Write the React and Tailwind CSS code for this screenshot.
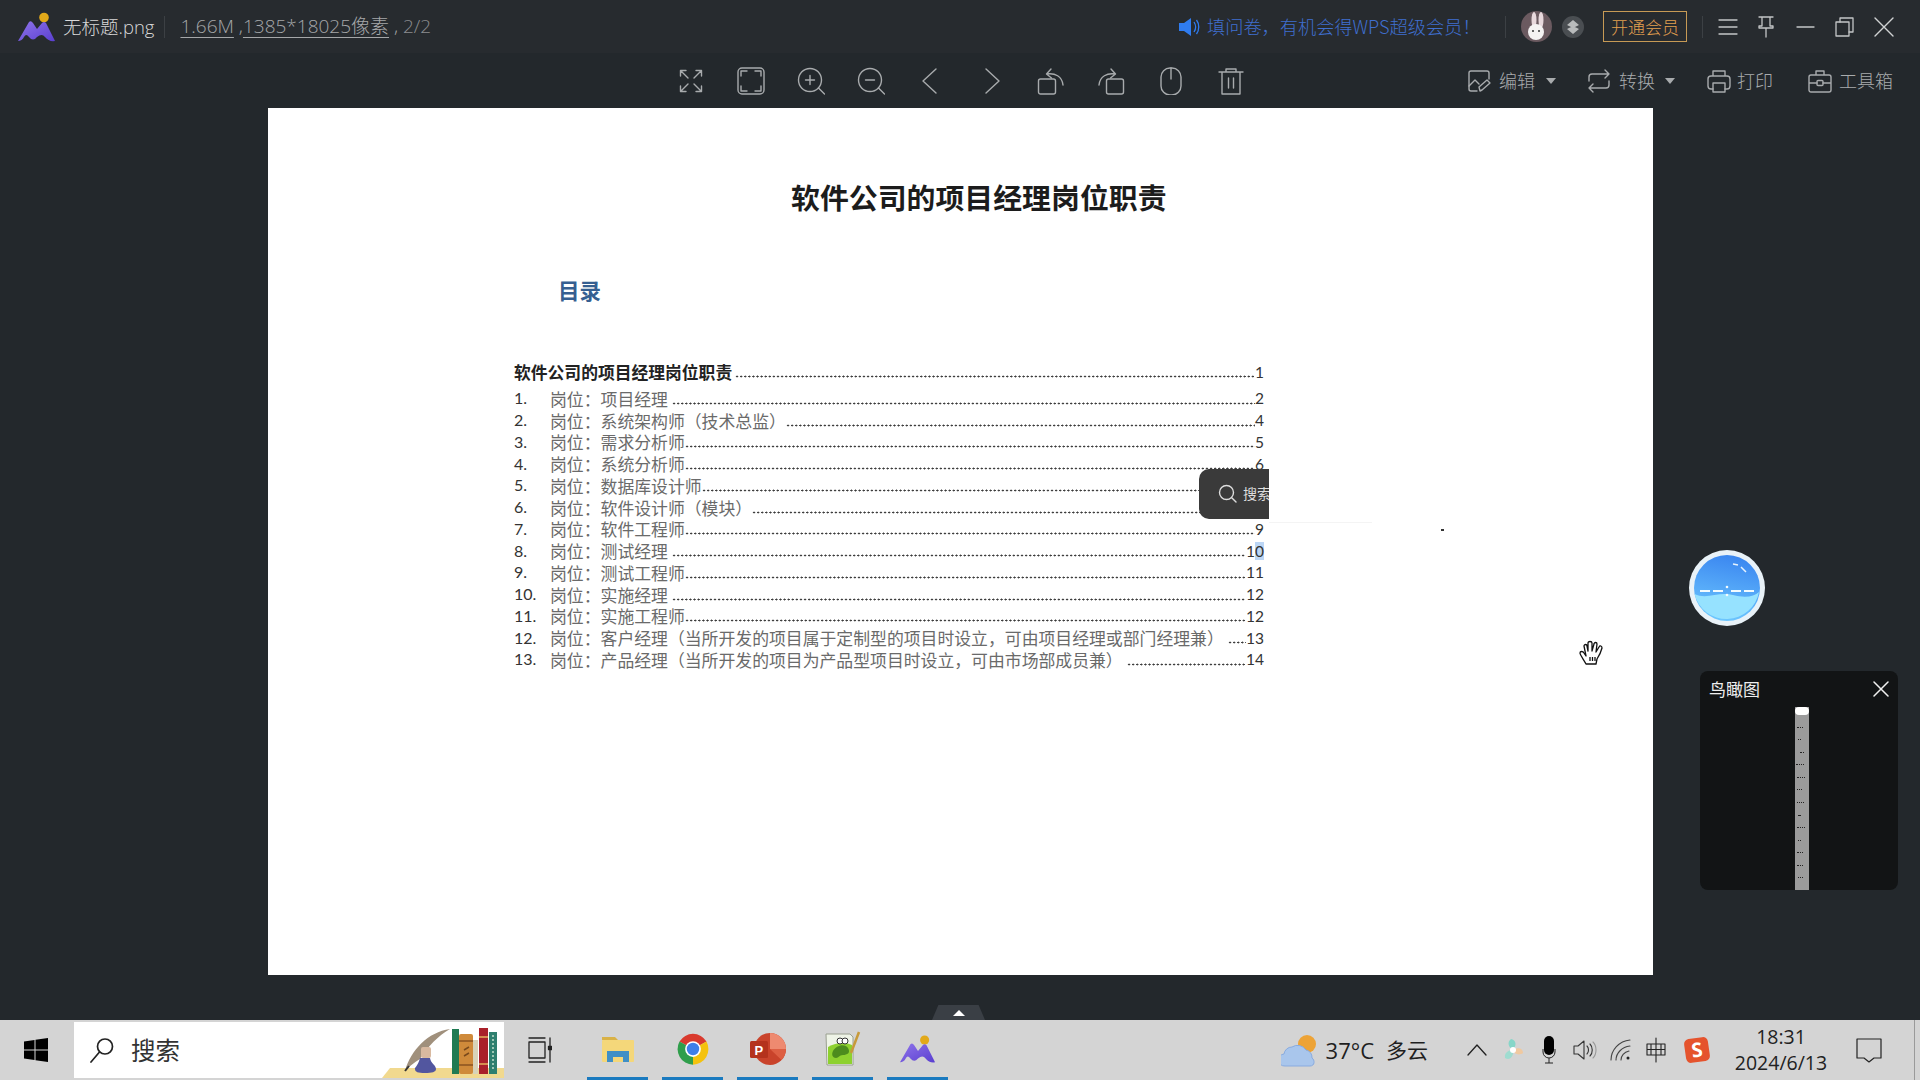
import React from "react";

const S = "#a8abad";
const Ico = ({ w = 28, h = 28, vb = "0 0 28 28", c = S, sw = 1.4, children, className = "" }) => (
  <svg width={w} height={h} viewBox={vb} fill="none" stroke={c} strokeWidth={sw} strokeLinecap="round" strokeLinejoin="round" className={"shrink-0 " + className}>
    {children}
  </svg>
);

const Logo = ({ w = 38, h = 30 }) => (
  <svg width={w} height={h} viewBox="0 0 38 30" className="shrink-0">
    <defs>
      <linearGradient id="lg" x1="0" y1="0" x2="1" y2="1">
        <stop offset="0" stopColor="#8f74ea" />
        <stop offset="1" stopColor="#5a3fd0" />
      </linearGradient>
    </defs>
    <circle cx="26" cy="5.5" r="4.8" fill="#e2a91a" />
    <path d="M0 29 L11 10 Q13 8 15 11 L19 17 L24 11 Q26 9 28 11 L37 29 Q31 30 27 25 Q24 21 19 25 Q15 30 11 25 Q8 21 6 25 Q4 29 0 29Z" fill="url(#lg)" />
  </svg>
);

const toolIcons = [
  <Ico key="a"><path d="M11 11 3.5 3.5M3.5 9V3.5H9M17 11l7.5-7.5M19 3.5h5.5V9M11 17l-7.5 7.5M3.5 19v5.500H9M17 17l7.500 7.500M24.500 19v5.500H19" /></Ico>,
  <Ico key="b"><rect x="1" y="1" width="26" height="26" rx="4" /><path d="M4 9V4h6M18 4h6v5M4 19v5h6M18 24h6v-5" /></Ico>,
  <Ico key="c"><circle cx="13" cy="13" r="11.500" /><path d="M13 8.500v9M8.500 13h9M21.500 21l6 6" /></Ico>,
  <Ico key="d"><circle cx="13" cy="13" r="11.500" /><path d="M8.500 13h9M21.500 21l6 6" /></Ico>,
  <Ico key="e"><path d="M19 2 6 14l13 12" /></Ico>,
  <Ico key="f"><path d="M9 2l13 12L9 26" /></Ico>,
  <Ico key="g"><rect x="1.500" y="12" width="17" height="15" rx="2" /><path d="M10 7c8-1 15 2 16 11M14 2 9.500 7l5 4" /></Ico>,
  <Ico key="h"><rect x="9.500" y="12" width="17" height="15" rx="2" /><path d="M18 7C10 6 3 9 2 18M14 2l4.500 5-5 4" /></Ico>,
  <Ico key="i"><rect x="4" y="1" width="20" height="27" rx="9" /><path d="M14 1v11" /></Ico>,
  <Ico key="j"><path d="M2 5h24M9 5V2h10v3M5 5v22h18V5M11.500 11v10M16.500 11v10" /></Ico>,
];

const rows = [
  ["1.", "岗位：项目经理", "2", 1],
  ["2.", "岗位：系统架构师（技术总监）", "4", 0],
  ["3.", "岗位：需求分析师", "5", 0],
  ["4.", "岗位：系统分析师", "6", 0],
  ["5.", "岗位：数据库设计师", "7", 0],
  ["6.", "岗位：软件设计师（模块）", "8", 0],
  ["7.", "岗位：软件工程师", "9", 0],
  ["8.", "岗位：测试经理", "10", 1],
  ["9.", "岗位：测试工程师", "11", 0],
  ["10.", "岗位：实施经理", "12", 1],
  ["11.", "岗位：实施工程师", "12", 0],
  ["12.", "岗位：客户经理（当所开发的项目属于定制型的项目时设立，可由项目经理或部门经理兼）", "13", 1],
  ["13.", "岗位：产品经理（当所开发的项目为产品型项目时设立，可由市场部成员兼）", "14", 1],
];
const cjk = "font-['Noto_Sans_CJK_SC',sans-serif]";
const num = "font-['Lato','Noto_Sans_CJK_SC',sans-serif]";
const ui = "font-['Open_Sans','Noto_Sans_CJK_SC',sans-serif]";
const leader = "mt-[9px] h-[3px] min-w-0 flex-1 bg-[radial-gradient(circle,#3a3a3a_0.8px,transparent_1.2px)] bg-[length:4.1px_3px] bg-repeat-x";

const Books = () => (
  <svg width="126" height="56" viewBox="0 0 126 56" className="shrink-0">
    <path d="M12 46h114v10H4z" fill="#f1d98f" />
    <path d="M27 49C33 28 50 10 72 7 60 14 50 24 42 37 36 41 31 44 27 49Z" fill="#a0907c" />
    <path d="M27 49 31 44" stroke="#333" strokeWidth="2" />
    <path d="M42 36c-2 8-6 10-5 11 0 3 3 4 10 4s11-1 11-4c0-4-5-5-6-11z" fill="#52569f" />
    <rect x="43" y="25" width="10" height="11" rx="2" fill="#d8b9a0" />
    <rect x="74" y="7" width="7" height="45" fill="#1f7a52" />
    <rect x="81" y="12" width="14" height="40" rx="2" fill="#cf8a3a" />
    <path d="M81 19h14M81 43h14" stroke="#8a5320" strokeWidth="1.500" />
    <path d="M86 28l5-3M86 34l5-3" stroke="#7a4a1c" strokeWidth="1.500" />
    <rect x="95" y="18" width="5" height="34" fill="#d8d3b8" />
    <rect x="101" y="6" width="9" height="46" fill="#a9202a" />
    <path d="M101 15h9M101 42h9" stroke="#e4b35c" strokeWidth="1.500" />
    <rect x="111" y="10" width="8" height="42" fill="#2f7f6f" />
    <path d="M115 13v36" stroke="#9fc7b5" strokeWidth="2" strokeDasharray="2 2" />
  </svg>
);

const Chrome = () => (
  <svg width="36" height="36" viewBox="0 0 48 48" className="shrink-0">
    <path d="M24 24 6 14A21 21 0 0 1 42 14Z" fill="#d93a2e" />
    <path d="M24 24 42 14A21 21 0 0 1 24 45Z" fill="#f4c20d" />
    <path d="M24 24 24 45A21 21 0 0 1 6 14Z" fill="#2f9e4b" />
    <circle cx="24" cy="24" r="10.500" fill="#fff" />
    <circle cx="24" cy="24" r="8.300" fill="#3f7fe8" />
  </svg>
);

const Folder = () => (
  <svg width="34" height="28" viewBox="0 0 34 28" className="shrink-0">
    <path d="M1 2h13l3 3h-16z" fill="#d9b247" />
    <rect x="1" y="5" width="32" height="22" rx="1" fill="#f4d77a" />
    <path d="M6 27V16h22v11h-6v-5H12v5z" fill="#3f8fc6" />
  </svg>
);

const Ppt = () => (
  <svg width="36" height="34" viewBox="0 0 36 34" className="shrink-0">
    <circle cx="20" cy="17" r="16" fill="#c9432b" />
    <path d="M20 1a16 16 0 0 1 16 16H20z" fill="#ee8a70" />
    <path d="M20 17h16a16 16 0 0 1-4.500 11z" fill="#dd5f43" />
    <rect x="0" y="9" width="18" height="17" rx="1.500" fill="#b4321d" />
    <text x="4.500" y="22.500" fill="#fff" fontSize="13" fontWeight="700" fontFamily="Liberation Sans">P</text>
  </svg>
);

const Npp = () => (
  <svg width="36" height="36" viewBox="0 0 36 36" className="shrink-0">
    <path d="M1 3h24l3 3v28H2z" fill="#eef3e6" stroke="#9aa090" />
    <path d="M3 16c8-5 18-5 24-2v19H3z" fill="#8ed12f" />
    <path d="M8 20c3-6 12-8 15-3s-1 7-5 7-4 3-7 3-5-3-3-7z" fill="#4d8c1d" />
    <circle cx="15" cy="10" r="3" fill="#fff" stroke="#333" />
    <circle cx="20" cy="10" r="3" fill="#fff" stroke="#333" />
    <path d="M34 1 26 22" stroke="#c79a3a" strokeWidth="2.500" />
  </svg>
);

const Win = () => (
  <svg width="24" height="24" viewBox="0 0 24 24" className="shrink-0">
    <path d="M0 3.500 10.500 2v9.500H0zM11.500 1.800 24 0v11.500H11.500zM0 12.500h10.500V22L0 20.500zM11.500 12.500H24V24l-12.500-1.800z" fill="#000" />
  </svg>
);

const Tray = ({ w, children, className = "" }) => (
  <div style={{ width: w }} className={"flex shrink-0 items-center justify-center " + className}>{children}</div>
);

const stripDots = ["w-[6px] ml-[2px]", "w-[3px] ml-[3px]", "w-[4px] ml-[5px]", "w-[8px] ml-[1px]", "w-[8px] ml-[2px]", "w-[5px] ml-[2px]", "w-[7px] ml-[2px]", "w-[2px] ml-[3px]", "w-[8px] ml-[2px]", "w-[3px] ml-[3px]", "w-[6px] ml-[2px]", "w-[6px] ml-[2px]", "w-[5px] ml-[3px]"];

const App = () => (
  <div className={"relative flex h-[1080px] w-[1920px] flex-col overflow-hidden bg-[#23282c] " + ui}>
    {/* title bar */}
    <header className="flex h-[53px] shrink-0 items-center bg-[#272b2f] pl-[18px]">
      <Logo />
      <span className="ml-[7px] text-[18.500px] font-light text-[#d8d8d8]">无标题.png</span>
      <span className="ml-[10px] h-[22px] w-px bg-[#3c4044]" />
      <span className="ml-[15px] whitespace-nowrap text-[19px] font-light text-[#a5a7a9]">
        <span className="underline underline-offset-4">1.66M</span> ,<span className="underline underline-offset-4">1385*18025像素</span> , <span className="text-[#8b8d8f]">2/2</span>
      </span>
      <div className="ml-auto flex items-center">
        <svg width="22" height="22" viewBox="0 0 22 22" className="shrink-0">
          <path d="M1 7h5l7-5v18l-7-5H1z" fill="#2f7cf0" />
          <path d="M16 6c2 3 2 7 0 10M18.500 4c3 4 3 10 0 14" stroke="#2f7cf0" strokeWidth="1.300" fill="none" />
        </svg>
        <span className={"ml-[7px] w-[298px] whitespace-nowrap text-[18.200px] font-light text-[#3f6fcf] " + cjk}>填问卷，有机会得WPS超级会员！</span>
        <span className="h-[22px] w-px bg-[#3c4044]" />
        <div className="relative ml-[15px] h-[31px] w-[31px] overflow-hidden rounded-full bg-[#6b5a60]">
          <svg width="31" height="31" viewBox="0 0 31 31">
            <ellipse cx="13" cy="9" rx="2.500" ry="8" fill="#e8d8dc" />
            <ellipse cx="20" cy="9" rx="2.500" ry="8" fill="#e8d8dc" />
            <circle cx="15" cy="21" r="8" fill="#f4f2f2" />
            <circle cx="12" cy="20" r="1" fill="#333" />
            <circle cx="18" cy="20" r="1" fill="#333" />
          </svg>
        </div>
        <div className="ml-[10px] flex h-[22px] w-[22px] items-center justify-center rounded-full bg-[#4a4e52]">
          <svg width="14" height="14" viewBox="0 0 14 14"><path d="M7 0l6 5-6 3-6-3zM7 6l6 3-6 5-6-5z" fill="#b9bbbc" /></svg>
        </div>
        <div className={"ml-[19px] flex h-[31px] w-[84px] items-center justify-center border border-[#c79a55] text-[17px] font-light text-[#e3a050] " + cjk}>开通会员</div>
        <span className="ml-[15px] h-[22px] w-px bg-[#3c4044]" />
        <Ico w={20} h={20} vb="0 0 20 20" c="#c4c6c7" sw={1.3} className="ml-[15px]"><path d="M1 3h18M1 10h18M1 17h18" /></Ico>
        <Ico w={20} h={22} vb="0 0 20 22" c="#c4c6c7" sw={1.3} className="ml-[18px]"><path d="M3 1h14M6 1v9H3v2h14v-2h-3V1M10 12v9" /></Ico>
        <Ico w={20} h={20} vb="0 0 20 20" c="#c4c6c7" sw={1.3} className="ml-[20px]"><path d="M1 10h17" /></Ico>
        <Ico w={20} h={20} vb="0 0 20 20" c="#c4c6c7" sw={1.3} className="ml-[19px]"><rect x="1" y="5" width="13" height="14" /><path d="M5 5V1h13v14h-4" /></Ico>
        <Ico w={20} h={20} vb="0 0 20 20" c="#d0d2d3" sw={1.4} className="ml-[19px] mr-[26px]"><path d="M1 1l18 18M19 1 1 19" /></Ico>
      </div>
    </header>

    {/* toolbar */}
    <div className="flex h-[55px] shrink-0 items-center pl-[677px]">
      <div className="flex items-center gap-[32px]">{toolIcons}</div>
      <div className="ml-auto flex items-center text-[18px] font-light text-[#a8abad]">
        <Ico w={24} h={24} vb="0 0 24 24"><path d="M10 22H4a2 2 0 0 1-2-2V4a2 2 0 0 1 2-2h16a2 2 0 0 1 2 2v6" /><path d="M2 17l6-6 4 4M13 22l-1-4 8-7 3 3-8 7z" /></Ico>
        <span className={"ml-[8px] " + cjk}>编辑</span>
        <span className="ml-[11px] h-0 w-0 border-x-[5px] border-t-[6px] border-x-transparent border-t-[#a8abad]" />
        <Ico w={22} h={24} vb="0 0 22 24" className="ml-[32px]"><path d="M1 12V8a3 3 0 0 1 3-3h17M17 1l4 4-4 4M21 12v4a3 3 0 0 1-3 3H1M5 15l-4 4 4 4" /></Ico>
        <span className={"ml-[9px] " + cjk}>转换</span>
        <span className="ml-[10px] h-0 w-0 border-x-[5px] border-t-[6px] border-x-transparent border-t-[#a8abad]" />
        <Ico w={24} h={24} vb="0 0 24 24" className="ml-[32px]"><path d="M6 7V2h12v5M6 20H4a3 3 0 0 1-3-3v-7a3 3 0 0 1 3-3h16a3 3 0 0 1 3 3v7a3 3 0 0 1-3 3h-2" /><path d="M6 14h12v9H6z" /></Ico>
        <span className={"ml-[6px] " + cjk}>打印</span>
        <Ico w={24} h={24} vb="0 0 24 24" className="ml-[35px]"><path d="M8 6V2h8v4M3 6h18a2 2 0 0 1 2 2v13a2 2 0 0 1-2 2H3a2 2 0 0 1-2-2V8a2 2 0 0 1 2-2zM1 14h8M15 14h8" /><rect x="9" y="11.500" width="6" height="5" rx="1" /></Ico>
        <span className={"ml-[7px] mr-[27px] whitespace-nowrap " + cjk}>工具箱</span>
      </div>
    </div>

    {/* viewer */}
    <main className="min-h-0 flex-1">
      <section className={"ml-[268px] h-[867px] w-[1385px] overflow-hidden bg-white pt-[68px] text-[#3a3a3a] " + cjk}>
        <h1 className="h-[40px] pl-[523px] text-[28.900px] font-bold leading-[40px] text-[#1c1c1c]">软件公司的项目经理岗位职责</h1>
        <h2 className="mt-[59px] h-[30px] pl-[290px] text-[21.500px] font-bold leading-[30px] text-[#365f91]">目录</h2>
        <div className="ml-[246px] mt-[54px] w-[750px]">
          <div className="flex h-[26px] items-center text-[16.800px] font-bold leading-[26px] text-[#222]">
            <span className="whitespace-nowrap">软件公司的项目经理岗位职责</span>
            <span className={"ml-[3px] " + leader} />
            <span className={"mb-[1px] text-[15.500px] font-normal text-[#333] " + num}>1</span>
          </div>
          <div className="mt-[3px]">
            {rows.map(([n, label, page, gap]) => (
              <div key={n} className="flex h-[21.750px] items-center leading-[21px]">
                <span className={"mb-[2px] w-[36px] shrink-0 text-[16px] text-[#333] " + num}>{n}</span>
                <span className="mb-[1px] shrink-0 whitespace-nowrap text-[16.850px] text-[#6a6a6a]">{label}</span>
                <span className={leader + (gap ? " ml-[4px]" : "")} />
                <span className={"text-[15.500px] text-[#333] " + num}>
                  {page === "10" ? <>1<span className="bg-[#bcd6f5]">0</span></> : page}
                </span>
              </div>
            ))}
          </div>
        </div>
      </section>
    </main>

    {/* taskbar */}
    <footer className="flex h-[60px] shrink-0 items-stretch bg-[#d4d4d4]">
      <div className="flex w-[72px] shrink-0 items-center justify-center"><Win /></div>
      <div className="my-[2px] ml-[2px] flex w-[430px] shrink-0 items-end bg-white pl-[16px]">
        <div className="flex h-full items-center">
          <Ico w={24} h={26} vb="0 0 24 26" c="#222" sw={1.700}><circle cx="15" cy="9.500" r="7.500" /><path d="M9.500 15 1 25" /></Ico>
          <span className={"ml-[17px] text-[24.500px] text-[#333] " + cjk}>搜索</span>
        </div>
        <div className="ml-auto"><Books /></div>
      </div>
      <div className="flex w-[83px] shrink-0 items-center pl-[24px]">
        <Ico w={24} h={26} vb="0 0 24 26" c="#222" sw={1.300}><path d="M1 1h16M1 25h16M1 5h16v16H1zM22 1v8M22 13v12" /><rect x="20.500" y="9.500" width="3" height="3" fill="#222" /></Ico>
      </div>
      {[<Folder />, <Chrome />, <Ppt />, <Npp />, <Logo w={36} h={30} />].map((ic, i) => (
        <div key={i} className="mr-[14px] flex w-[61px] shrink-0 flex-col items-center">
          <div className="flex flex-1 items-center justify-center">{ic}</div>
          <div className="h-[3px] w-full bg-[#1a7abf]" />
        </div>
      ))}
      <div className="ml-auto flex items-center text-[#1f1f1f]">
        <svg width="38" height="34" viewBox="0 0 38 34" className="shrink-0">
          <circle cx="26" cy="11" r="9" fill="#eda336" />
          <path d="M4 33a6 6 0 0 1-1-12 8 8 0 0 1 8-7 10 10 0 0 1 14 3 8 8 0 0 1 6 8c3 2 3 8-2 8z" fill="#a9c6ec" stroke="#88abe0" />
        </svg>
        <span className="ml-[7px] whitespace-nowrap text-[22px]">37°C</span>
        <span className={"ml-[12px] whitespace-nowrap text-[21px] " + cjk}>多云</span>
        <Tray w={36} className="ml-[31px]"><Ico w={20} h={12} vb="0 0 20 12" c="#222" sw={1.300}><path d="M1 11l9-10 9 10" /></Ico></Tray>
        <Tray w={36}>
          <svg width="22" height="24" viewBox="0 0 22 24">
            <path d="M11 12C6 9 5 4 9 1c5 1 6 6 2 11z" fill="#86d6c8" />
            <path d="M11 12c5-3 10-2 10 3-4 3-9 1-10-3z" fill="#f0c9a0" />
            <path d="M11 12c-5 0-9 3-8 8 5 3 9-2 8-8z" fill="#9fdcd0" />
            <circle cx="11" cy="12" r="3" fill="#fff" />
          </svg>
        </Tray>
        <Tray w={36}>
          <svg width="14" height="28" viewBox="0 0 14 28"><rect x="2" y="0" width="10" height="19" rx="5" fill="#000" /><path d="M1 13v3a6 6 0 0 0 12 0v-3M7 22v5M3 27h8" fill="none" stroke="#222" /></svg>
        </Tray>
        <Tray w={36}>
          <Ico w={24} h={22} vb="0 0 24 22" c="#333" sw={1.100}><path d="M1 7h4l6-5v18l-6-5H1zM14 7c2 2 2 6 0 8M17 5c3 3 3 9 0 12" /><path d="M20 3c4 4 4 12 0 16" stroke="#999" /></Ico>
        </Tray>
        <Tray w={36}>
          <Ico w={22} h={22} vb="0 0 22 22" c="#444" sw={1.100}><path d="M1 21C1 11 9 2 20 1M6 21c0-7 6-13 14-14M11 21c0-4 3-8 8-9" /><circle cx="18" cy="19" r="1.500" fill="#222" stroke="none" /></Ico>
        </Tray>
        <Tray w={33}>
          <Ico w={22} h={26} vb="0 0 22 26" c="#222" sw={1.100}><path d="M2 7h18v11H2zM6 7v11M16 7v11M2 12.500h18M11 1v24" /></Ico>
        </Tray>
        <Tray w={50}>
          <div className="flex h-[24px] w-[24px] rotate-[-8deg] items-center justify-center rounded-[5px] bg-[#e5532d] text-[20px] font-bold leading-none text-white">S</div>
        </Tray>
        <div className="flex w-[118px] flex-col items-center text-[19.500px] leading-[26px] text-[#222]">
          <span>18:31</span>
          <span>2024/6/13</span>
        </div>
        <Tray w={58} className="mr-[22px]">
          <Ico w={26} h={26} vb="0 0 26 26" c="#222" sw={1.200}><path d="M1 2h24v19h-7l-5 4-5-4H1z" /></Ico>
        </Tray>
      </div>
    </footer>

    {/* floating items */}
    <div className={"absolute left-[1199px] top-[469px] flex h-[50px] w-[70px] items-center overflow-hidden rounded-l-[10px] bg-[#3a3a3a] pb-[2px] pl-[19px] text-[14px] text-[#ddd] " + cjk}>
      <Ico w={19} h={19} vb="0 0 19 19" c="#dcdcdc" sw={1.400} className="shrink-0"><circle cx="8.500" cy="8.500" r="7" /><path d="M14 14l4 4" /></Ico>
      <span className="ml-[6px] whitespace-nowrap">搜索</span>
    </div>
    <div className="absolute left-[1269px] top-[522px] h-px w-[103px] bg-[#f4f4f4]" />
    <div className="absolute left-[1441px] top-[529px] h-[2px] w-[3px] bg-[#333]" />

    <svg width="76" height="76" viewBox="0 0 76 76" className="absolute left-[1689px] top-[550px]">
      <defs>
        <linearGradient id="dial" x1="0.600" y1="0" x2="0.400" y2="1">
          <stop offset="0" stopColor="#3a86f0" />
          <stop offset="1" stopColor="#6ec8ff" />
        </linearGradient>
      </defs>
      <circle cx="38" cy="38" r="38" fill="#e9f2f8" />
      <circle cx="38" cy="38" r="33" fill="url(#dial)" />
      <path d="M5.500 44C18 50 30 41 44 45 55 48 65 47 70 42A33 33 0 0 1 5.500 44Z" fill="#96e2ff" />
      <path d="M11 41h10M24 41h10M42 41h10M55 41h10" stroke="#f2fbff" strokeWidth="2" />
      <circle cx="38" cy="37" r="1.300" fill="#f2fbff" />
      <circle cx="38" cy="45" r="1.300" fill="#f2fbff" />
      <path d="M44 14l5 1M52 17l5 5" stroke="#e6f3ff" strokeWidth="1.500" />
    </svg>

    <svg width="26" height="26" viewBox="0 0 26 26" className="absolute left-[1579px] top-[640px]" fill="#fff" stroke="#111" strokeWidth="1.300" strokeLinejoin="round">
      <path d="M7 24C5 20 1 15 1 13s3-2 4 0l2 3-2-10c0-2 3-2 3 0l1 5 0-8c0-2 4-2 4 0l0 8 2-7c0-2 3-2 3 0l-1 8 3-5c1-2 3-1 3 1-1 4-3 8-5 11l-1 5z" />
      <path d="M11 17v4M13.500 17v4M16 17v4" />
    </svg>

    <aside className={"absolute left-[1700px] top-[671px] flex h-[219px] w-[198px] flex-col rounded-[8px] bg-[#121415] " + cjk}>
      <div className="flex h-[36px] shrink-0 items-center justify-between px-[9px] text-[17px] text-[#eee]">
        <span>鸟瞰图</span>
        <Ico w={16} h={16} vb="0 0 16 16" c="#f0f0f0" sw={1.500}><path d="M1 1l14 14M15 1 1 15" /></Ico>
      </div>
      <div className="ml-[95px] flex h-[183px] w-[14px] flex-col bg-[#9b9b9b]">
        <div className="h-[8px] shrink-0 rounded-full bg-white" />
        <div className="flex flex-1 flex-col justify-evenly">
          {stripDots.map((d, i) => (
            <div key={i} className={"h-px border-t border-dotted border-[#222] " + d} />
          ))}
        </div>
      </div>
    </aside>

    <div className="absolute left-[932px] top-[1005px] flex h-[15px] w-[53px] items-center justify-center bg-[#3a3f45] [clip-path:polygon(12%_0,88%_0,100%_100%,0_100%)]">
      <span className="h-0 w-0 border-x-[6px] border-b-[6px] border-x-transparent border-b-white" />
    </div>
    <div className="absolute right-[5px] top-[1020px] h-[60px] w-px bg-[#9a9a9a]" />
  </div>
);

export default App;
